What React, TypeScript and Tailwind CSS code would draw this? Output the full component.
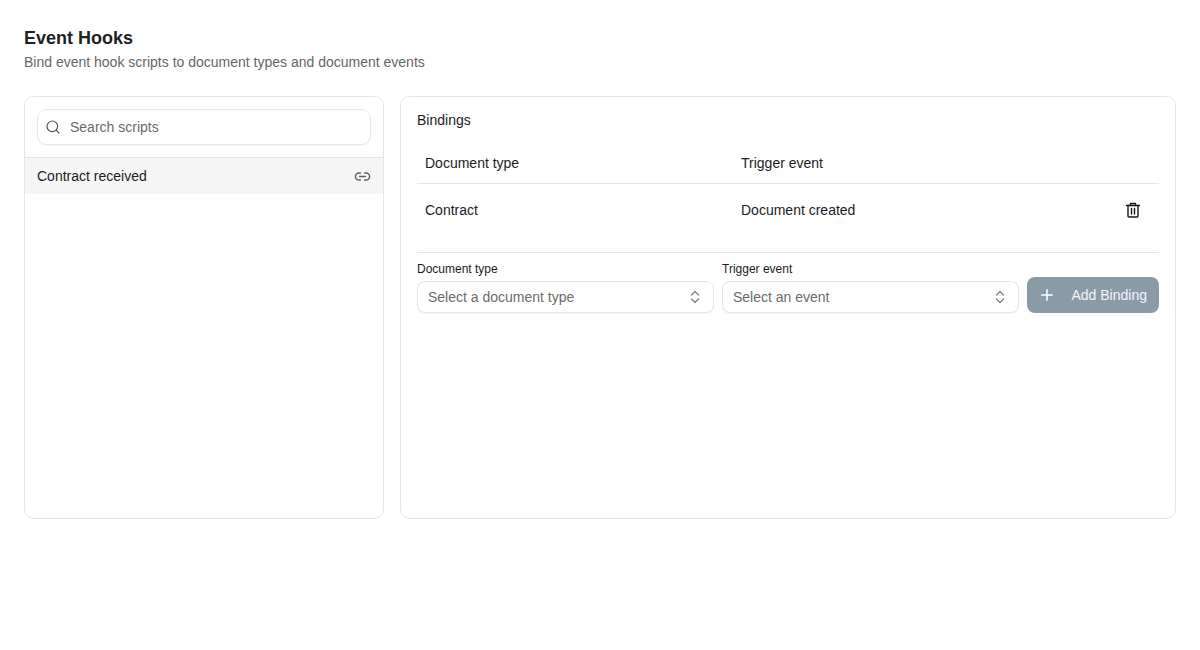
import { Link2, Plus, Search } from 'lucide-react'

function ChevronsIcon() {
  return (
    <svg viewBox="0 0 16 16" fill="none" stroke="currentColor" strokeWidth={1.25} strokeLinecap="round" strokeLinejoin="round" className="w-4 h-4 text-[#808080]">
      <path d="M4.5 6 8 2.5 11.5 6" />
      <path d="M4.5 10 8 13.5 11.5 10" />
    </svg>
  )
}

function TrashIcon() {
  return (
    <svg viewBox="0 0 16 16" fill="none" stroke="currentColor" strokeWidth={1.4} strokeLinecap="round" strokeLinejoin="round" className="w-4 h-4 text-[#171717]">
      <path d="M1.5 3.5h13" />
      <path d="M5.5 3.5V1.5h5v2" />
      <path d="M3 3.5V14a1 1 0 0 0 1 1h8a1 1 0 0 0 1-1V3.5" />
      <path d="M6.5 6.5v5.5" />
      <path d="M9.5 6.5v5.5" />
    </svg>
  )
}

function SelectField({ label, placeholder }: { label: string; placeholder: string }) {
  return (
    <div className="flex-1 min-w-0">
      <div className="text-xs leading-4 text-[#1c1c1c] mb-1">{label}</div>
      <div className="h-8 flex items-center justify-between pl-[10px] pr-[10px] bg-white border border-[#e5e5e5] rounded-lg shadow-xs text-sm text-[#6b6b6b]">
        <span>{placeholder}</span>
        <ChevronsIcon />
      </div>
    </div>
  )
}

export default function App() {
  return (
    <div className="w-[1200px] h-[650px] bg-white p-6 font-['Liberation_Sans',Arial,sans-serif] text-[#1c1c1c]">
      <h1 className="text-lg leading-7 font-bold text-[#1f1f1f]">Event Hooks</h1>
      <p className="text-sm leading-5 text-[#666666]">Bind event hook scripts to document types and document events</p>

      <div className="flex gap-4 mt-6 h-[423px]">
        {/* Scripts list */}
        <div className="w-[360px] shrink-0 border border-[#e5e5e5] rounded-[10px] overflow-hidden">
          <div className="p-3">
            <div className="h-9 flex items-center gap-[9px] pl-[7px] border border-[#e5e5e5] rounded-[10px] shadow-xs text-sm text-[#6b6b6b]">
              <Search className="w-4 h-4 text-[#525252]" strokeWidth={1.75} />
              <span>Search scripts</span>
            </div>
          </div>
          <div className="h-[37px] flex items-center justify-between px-3 bg-[#f5f5f5] border-t border-[#e5e5e5] text-sm">
            <span>Contract received</span>
            <Link2 className="w-[17px] h-[17px] text-[#5f5f5f]" strokeWidth={2} />
          </div>
        </div>

        {/* Bindings */}
        <div className="flex-1 border border-[#e5e5e5] rounded-[10px] px-4 pt-[13px]">
          <div className="text-sm leading-5">Bindings</div>
          <div className="mt-[13px] h-[41px] flex items-center px-2 border-b border-[#e5e5e5] text-sm">
            <span className="w-[316px]">Document type</span>
            <span>Trigger event</span>
          </div>
          <div className="h-[52px] flex items-center pl-2 pr-[18px] text-sm">
            <span className="w-[316px]">Contract</span>
            <span className="flex-1">Document created</span>
            <TrashIcon />
          </div>
          <div className="mt-4 pt-2 border-t border-[#e5e5e5] flex items-end gap-2">
            <SelectField label="Document type" placeholder="Select a document type" />
            <SelectField label="Trigger event" placeholder="Select an event" />
            <button className="w-[132px] h-9 shrink-0 flex items-center justify-between pl-[11px] pr-3 bg-[#8a9ba8] rounded-lg text-sm text-white/90">
              <Plus className="w-[18px] h-[18px] text-white" strokeWidth={2} />
              <span>Add Binding</span>
            </button>
          </div>
        </div>
      </div>
    </div>
  )
}
